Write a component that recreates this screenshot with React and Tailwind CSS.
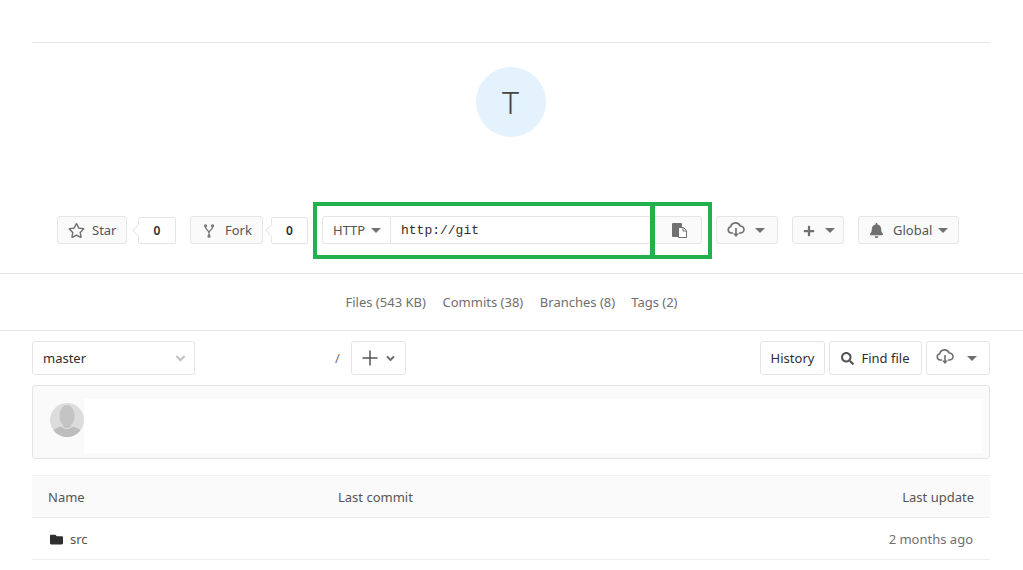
import React from 'react';
import { Plus } from 'lucide-react';
import { FaRegStar, FaBell, FaPlus, FaSearch, FaFolder, FaAngleDown } from 'react-icons/fa';

function Caret() {
  return <span className="w-0 h-0 border-x-[5px] border-x-transparent border-t-[5px] border-t-[#707070]"></span>;
}

function Btn({ className = '', children }) {
  return (
    <div className={`h-[28px] flex items-center border border-[#e5e5e5] rounded-[3px] bg-[#fafafa] pt-px text-[13px] text-[#555555] ${className}`}>
      {children}
    </div>
  );
}

function Count({ className = '' }) {
  return (
    <div className={`relative h-[27px] flex items-center justify-center border border-[#e5e5e5] rounded-[2px] bg-white pt-px text-[12px] font-semibold text-[#2e2e2e] ${className}`}>
      0
      <span className="absolute left-[-5px] top-[8px] w-[9px] h-[9px] rotate-45 bg-white border-l border-b border-[#e5e5e5]"></span>
    </div>
  );
}

function CloudIcon() {
  return (
    <svg width="18" height="16" viewBox="0 0 18 16" fill="none" stroke="#707070" strokeWidth="1.6" className="-mt-[2px]">
      <path d="M5.5 11H4.2a3.2 3.2 0 0 1-.5-6.300A5 5 0 0 1 13.200 4a3.500 3.500 0 0 1 .6 7H12.500" strokeLinecap="round" />
      <path d="M9 6v8" />
      <path d="M6 11.500l3 3.500 3-3.500z" fill="#707070" stroke="none" />
    </svg>
  );
}

function ForkIcon() {
  return (
    <svg width="10" height="14" viewBox="0 0 10 14" fill="none" stroke="#707070" strokeWidth="1.200">
      <circle cx="1.500" cy="1.800" r="1" />
      <circle cx="8.500" cy="1.800" r="1" />
      <circle cx="5" cy="12.200" r="1" />
      <path d="M1.500 3c0 3 3.500 3 3.500 6v2M8.500 3c0 3-3.500 3-3.500 6" />
    </svg>
  );
}

function CopyIcon() {
  return (
    <svg width="15" height="15" viewBox="0 0 15 15">
      <path d="M1 0h8a1 1 0 0 1 1 1v3H7v10H1a1 1 0 0 1-1-1V1a1 1 0 0 1 1-1z" fill="#707070" />
      <path d="M6.500 4.500h5l3 3v7h-8z" fill="#ffffff" stroke="#707070" />
      <path d="M11 4.500v3.500h3.500" fill="none" stroke="#707070" />
    </svg>
  );
}

export default function App() {
  return (
    <div className="relative h-[570px] w-[1023px] overflow-hidden bg-white font-['Noto_Sans',sans-serif] text-[13px] text-[#2e2e2e]">
      <div className="mx-[32px] w-[958px] pt-[42px]">
        <div className="border-t border-[#e5e5e5]"></div>
      </div>

      <div className="flex justify-center pt-[24px] pr-[1px]">
        <div className="w-[70px] h-[70px] rounded-full bg-[#e3f2fd] flex items-center justify-center pr-[1px] text-[32px] font-light text-[#444444]">T</div>
      </div>

      <div className="flex items-center pt-[79px] pl-[57px] pb-[29px] border-b border-[#e5e5e5] h-[137px]">
        <Btn className="w-[70px] pl-[10px]">
          <FaRegStar size={17} className="text-[#707070]" />
          <span className="ml-[7px]">Star</span>
        </Btn>
        <Count className="ml-[11px] w-[38px]" />
        <Btn className="w-[73px] pl-[13px] ml-[14px]">
          <ForkIcon />
          <span className="ml-[11px]">Fork</span>
        </Btn>
        <Count className="ml-[8px] w-[37px]" />
        <Btn className="ml-[14px] w-[69px] pl-[10px] rounded-r-none bg-white">
          HTTP
          <span className="ml-[6px] flex"><Caret /></span>
        </Btn>
        <div className="h-[28px] w-[260px] flex items-center border-y border-[#e5e5e5] pl-[10px] pt-px font-['Liberation_Mono',monospace] text-[13px] text-[#2e2e2e]">
          http://git
        </div>
        <Btn className="w-[51px] justify-center rounded-l-none pl-[6px]">
          <CopyIcon />
        </Btn>
        <Btn className="ml-[14px] w-[62px] pl-[10px]">
          <CloudIcon />
          <span className="ml-[10px] flex"><Caret /></span>
        </Btn>
        <Btn className="ml-[14px] w-[52px] pl-[10px]">
          <FaPlus size={12} className="text-[#707070]" />
          <span className="ml-[10px] flex"><Caret /></span>
        </Btn>
        <Btn className="ml-[14px] w-[101px] pl-[10px]">
          <FaBell size={15} className="text-[#707070]" />
          <span className="ml-[9px]">Global</span>
          <span className="ml-[6px] flex"><Caret /></span>
        </Btn>
      </div>

      <div className="h-[57px] flex items-center justify-center gap-[16px] border-b border-[#e5e5e5] pt-[2px] text-[#707070]">
        <span>Files (543 KB)</span>
        <span className="w-[82px] text-center">Commits (38)</span>
        <span>Branches (8)</span>
        <span>Tags (2)</span>
      </div>

      <div className="mx-[32px] w-[958px]">
        <div className="flex items-center mt-[10px] h-[34px]">
          <div className="w-[163px] h-[34px] flex items-center justify-between border border-[#e5e5e5] rounded-[3px] pl-[10px] pr-[6px] pt-px">
            master
            <FaAngleDown size={15} className="text-[#c4c4c4]" />
          </div>
          <span className="ml-[140px] pt-px text-[#707070]">/</span>
          <div className="ml-[11px] w-[55px] h-[34px] flex items-center justify-center gap-[2px] border border-[#e5e5e5] rounded-[3px] pr-[1px]">
            <Plus size={24} strokeWidth={1.5} className="text-[#555555]" />
            <FaAngleDown size={13} className="text-[#707070]" />
          </div>
          <div className="ml-auto flex items-center gap-[4px]">
            <div className="w-[65px] h-[34px] flex items-center justify-center border border-[#e5e5e5] rounded-[3px] pt-px">History</div>
            <div className="w-[93px] h-[34px] flex items-center justify-center gap-[7px] border border-[#e5e5e5] rounded-[3px] pt-px">
              <FaSearch size={13} className="text-[#555555]" />
              Find file
            </div>
            <div className="w-[64px] h-[34px] flex items-center pl-[9px] border border-[#e5e5e5] rounded-[3px]">
              <CloudIcon />
              <span className="ml-[13px] flex"><Caret /></span>
            </div>
          </div>
        </div>

        <div className="mt-[10px] h-[74px] flex items-stretch border border-[#e5e5e5] rounded-[3px] bg-[#fafafa] pt-[13px] pb-[5px] pl-[17px] pr-[7px]">
          <svg width="34" height="34" viewBox="0 0 34 34" className="shrink-0 mt-[4px]">
            <clipPath id="avatarClip"><circle cx="17" cy="17" r="17" /></clipPath>
            <g clipPath="url(#avatarClip)">
              <rect width="34" height="34" fill="#dcdcdc" />
              <ellipse cx="17" cy="13" rx="7.500" ry="11" fill="#c4c4c4" />
              <ellipse cx="17" cy="33" rx="17" ry="10" fill="#bdbdbd" />
              <path d="M11 23 Q17 28 23 23" stroke="#e4e4e4" strokeWidth="1" fill="none" />
            </g>
          </svg>
          <div className="flex-1 bg-white"></div>
        </div>

        <div className="mt-[16px] h-[43px] flex items-center bg-[#fafafa] border-y border-[#eeeeee] pl-[16px] pr-[16px] pt-[2px] text-[#555555]">
          <span className="w-[290px]">Name</span>
          <span>Last commit</span>
          <span className="ml-auto">Last update</span>
        </div>
        <div className="h-[42px] flex items-center border-b border-[#eeeeee] pl-[18px] pr-[17px] pt-[2px]">
          <FaFolder size={13} className="mr-[7px] text-[#2e2e2e]" />
          <span className="text-[#555555]">src</span>
          <span className="ml-auto text-[#707070]">2 months ago</span>
        </div>
      </div>

      {/* highlight boxes drawn on top of the clone bar */}
      <div className="absolute left-[313px] top-[202px] w-[341px] h-[57px] border-[4px] border-[#22b14c]"></div>
      <div className="absolute left-[651px] top-[202px] w-[61px] h-[57px] border-[4px] border-[#22b14c]"></div>
    </div>
  );
}
